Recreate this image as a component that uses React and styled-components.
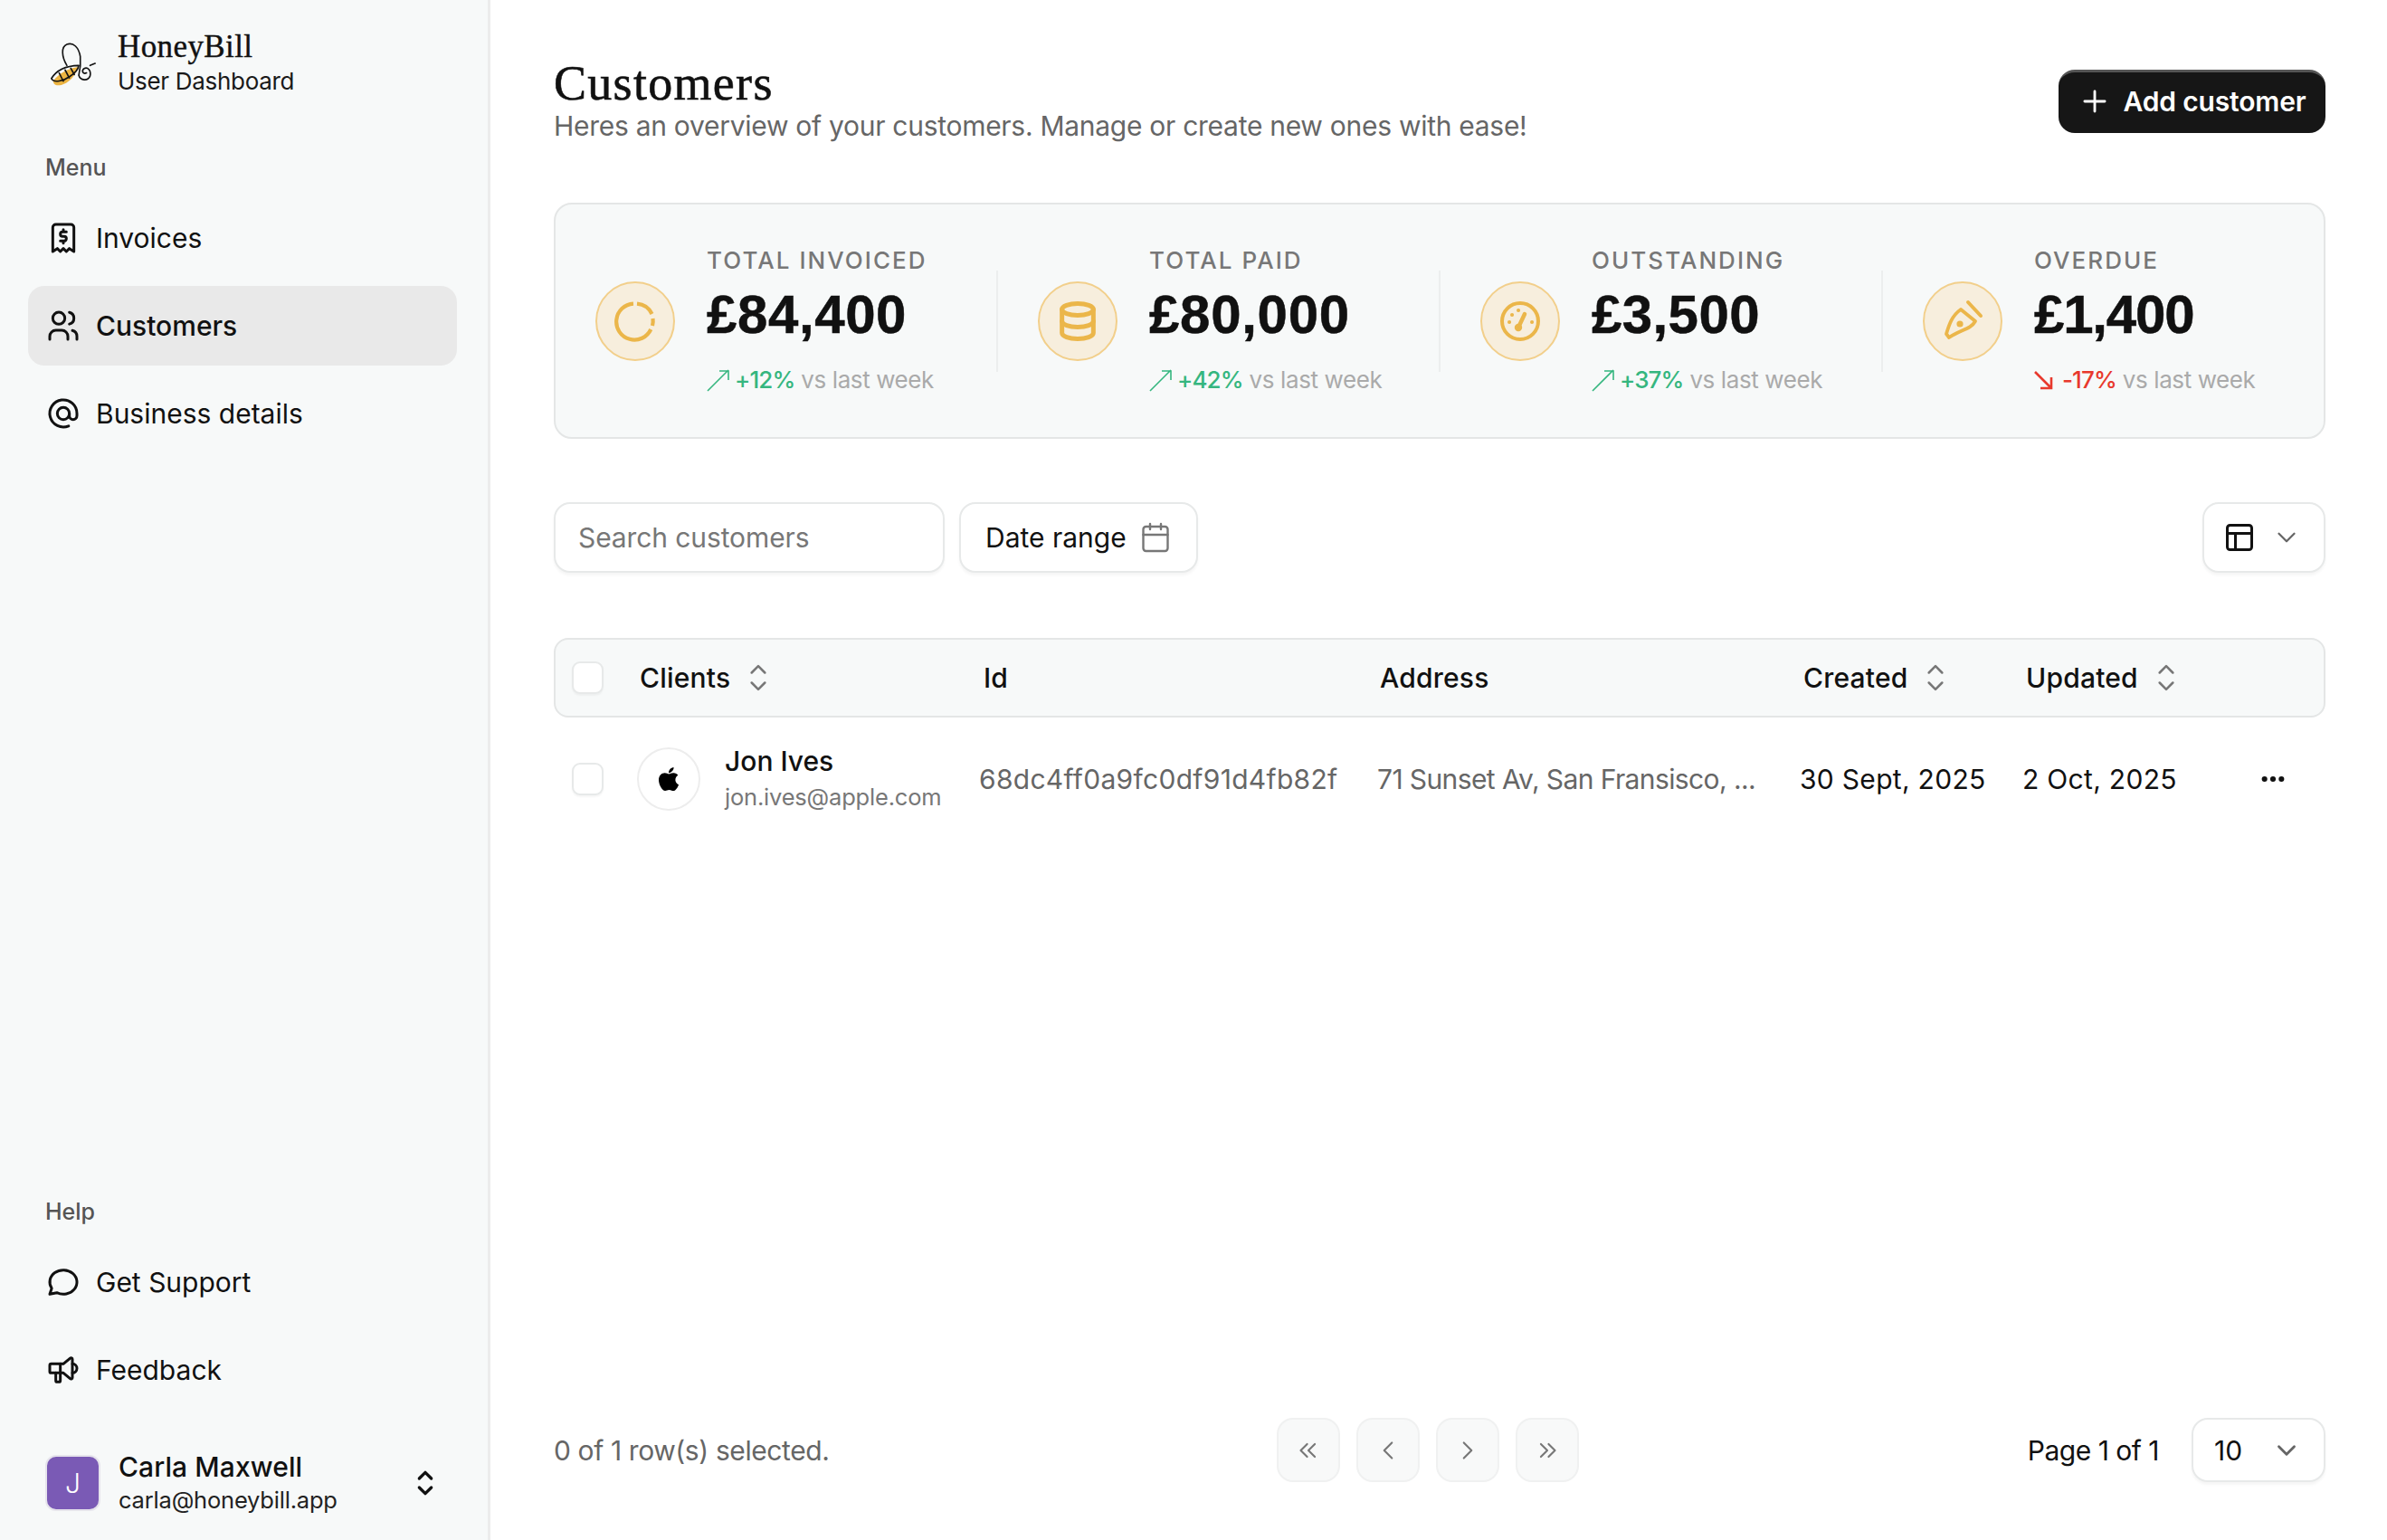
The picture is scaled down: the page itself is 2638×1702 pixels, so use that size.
import React from "react";
import styled, { createGlobalStyle } from "styled-components";
import { TbReceipt2, TbUsers, TbAt, TbMessageCircle, TbSpeakerphone, TbSelector, TbDatabase, TbPlus, TbChevronDown, TbChevronLeft, TbChevronRight, TbChevronsLeft, TbChevronsRight, TbDots } from "react-icons/tb";
import { FaApple } from "react-icons/fa";
import { PanelsTopLeft, Calendar } from "lucide-react";

const Global = createGlobalStyle`
  html, body { margin: 0; padding: 0; background: #fff; }
  body { font-family: Inter, "Liberation Sans", sans-serif; color: #111; -webkit-font-smoothing: antialiased; }
  * { box-sizing: border-box; }
`;

const Shell = styled.div`display: flex; width: 2638px; height: 1702px; overflow: hidden;`;
const Sidebar = styled.aside`
  width: 542px; flex: none; background: #f7f9f9; border-right: 3px solid #ececec;
  display: flex; flex-direction: column; padding: 0 34px 32px 31px;
`;
const Brand = styled.div`display: flex; align-items: flex-start; height: 149px; padding-top: 30px; gap: 23px; margin-left: 23px;`;
const BrandText = styled.div`display: flex; flex-direction: column;`;
const BrandName = styled.div`font: 500 35px/44px "Liberation Serif", serif; color: #111; letter-spacing: 0.4px; -webkit-text-stroke: 0.4px #111;`;
const BrandSub = styled.div`font-size: 26px; line-height: 32px; color: #1a1a1a; letter-spacing: -0.3px;`;
const SectionLabel = styled.div`font-size: 25px; line-height: 44px; font-weight: 500; color: #555; margin-left: 19px; height: 70px; padding-top: 14px;`;
const NavList = styled.nav`display: flex; flex-direction: column; gap: 9px;`;
const NavItem = styled.div`
  height: 88px; display: flex; align-items: center; gap: 16px; padding-left: 19px; border-radius: 18px;
  font-size: 30px; color: #111; letter-spacing: 0;
  background: ${(p) => (p.$active ? "#e9e9e9" : "transparent")};
  font-weight: ${(p) => (p.$active ? 500 : 400)};
  svg { flex: none; }
`;
const Spacer = styled.div`flex: 1;`;
const UserBlock = styled.div`display: flex; align-items: center; margin: 50px 0 0 19px; height: 62px;`;
const Avatar = styled.div`
  width: 61px; height: 62px; border-radius: 12px; background: #7a5ab5; border: 2px solid #e6e4ec;
  color: #fff; display: flex; align-items: center; justify-content: center; font-size: 30px; font-weight: 300; flex: none;
`;
const UserText = styled.div`display: flex; flex-direction: column; margin-left: 20px; flex: 1;`;
const UserName = styled.div`font-size: 30px; line-height: 38px; font-weight: 500; color: #111; letter-spacing: 0.1px;`;
const UserMail = styled.div`font-size: 25.5px; line-height: 36px; color: #222; letter-spacing: -0.2px;`;
const UserToggle = styled(TbSelector)`margin-right: 15px; flex: none;`;
const Main = styled.main`flex: 1; min-width: 0; display: flex; flex-direction: column; padding: 66px 68px 64px 70px;`;
const PageHead = styled.header`display: flex; justify-content: space-between; align-items: flex-start; height: 93px; margin-bottom: 65px;`;
const HeadText = styled.div`display: flex; flex-direction: column;`;
const Title = styled.h1`margin: 0; font: 400 54px/53px "Liberation Serif", serif; color: #111; letter-spacing: 1.3px; -webkit-text-stroke: 0.6px #111;`;
const Subtitle = styled.p`margin: 0; font-size: 30px; line-height: 40px; color: #666; letter-spacing: -0.28px;`;
const PrimaryButton = styled.button`
  width: 295px; height: 70px; margin-top: 11px; border: 0; border-top: 3px solid #555; border-radius: 18px; background: #161616; color: #fff;
  display: flex; align-items: center; justify-content: center; gap: 12px; padding: 0 0 4px; font: 600 30px Inter, sans-serif; letter-spacing: -0.15px;
`;
const StatsCard = styled.section`
  height: 261px; background: #f7f9f9; border: 2px solid #e4e6e6; border-radius: 20px; display: flex; align-items: center; margin-bottom: 70px;
`;
const Stat = styled.div`flex: 1; display: flex; align-items: center; gap: 35px; padding-left: 44px;`;
const StatDivider = styled.div`width: 2px; height: 112px; background: #eceeee; flex: none;`;
const IconCircle = styled.div`
  width: 88px; height: 88px; border-radius: 50%; background: #f7eedd; border: 2px solid #f2cf8b; color: #ebb64a;
  display: flex; align-items: center; justify-content: center; flex: none;
`;
const StatBody = styled.div`display: flex; flex-direction: column;`;
const StatLabel = styled.div`font-size: 26px; line-height: 34px; color: #777; letter-spacing: 2.05px; font-weight: 500;`;
const StatValue = styled.div`
  font: 700 60px/70px "Liberation Sans", sans-serif; color: #111; margin: 8px 0 19px; -webkit-text-stroke: 0.5px #111;
  letter-spacing: ${(p) => p.$tracking}px;
`;
const Trend = styled.div`display: flex; align-items: center; font-size: 26px; line-height: 36px; color: #aaa; gap: 7px; letter-spacing: -0.4px;`;
const Delta = styled.span`color: ${(p) => (p.$down ? "#e8392d" : "#35b67f")}; font-weight: 500; letter-spacing: -0.9px;`;
const Toolbar = styled.div`display: flex; gap: 16px; height: 78px; margin-bottom: 72px;`;
const Field = styled.div`
  height: 78px; background: #fff; border: 2px solid #e7e9e9; border-radius: 18px; box-shadow: 0 3px 3px rgba(0,0,0,.04);
  display: flex; align-items: center; font-size: 30px;
`;
const SearchField = styled(Field)`width: 432px; padding-left: 25px; color: #777; letter-spacing: -0.1px;`;
const DateField = styled(Field)`width: 264px; padding-left: 27px; gap: 14px; color: #111;`;
const ViewField = styled(Field)`width: 136px; margin-left: auto; padding-left: 21px; gap: 17px;`;
const TableHeader = styled.div`
  height: 88px; display: grid; grid-template-columns: 75px 380px 438px 468px 246px 1fr; align-items: center;
  background: #f7f9f9; border: 2px solid #e4e6e6; border-radius: 16px; padding-left: 18px;
  font-size: 30px; font-weight: 500; color: #111; letter-spacing: 0.2px;
`;
const TableRow = styled.div`
  height: 136px; display: grid; grid-template-columns: 72px 378px 440px 467px 246px 261px 1fr; align-items: center;
  padding-left: 20px; font-size: 30px; letter-spacing: 0.3px;
`;
const HeadCell = styled.div`display: flex; align-items: center; gap: 9px;`;
const Check = styled.div`width: 35px; height: 36px; background: #fff; border: 2px solid #e7e9e9; border-radius: 9px; box-shadow: 0 2px 2px rgba(0,0,0,.04);`;
const ClientCell = styled.div`display: flex; align-items: center; gap: 27px;`;
const LogoCircle = styled.div`width: 70px; height: 70px; border-radius: 50%; border: 2px solid #ededed; background: #fff; display: flex; align-items: center; justify-content: center; flex: none;`;
const ClientText = styled.div`display: flex; flex-direction: column;`;
const ClientName = styled.div`font-size: 30px; line-height: 40px; font-weight: 500; color: #111; letter-spacing: 0;`;
const ClientMail = styled.div`font-size: 25.5px; line-height: 40px; color: #777; letter-spacing: -0.2px; white-space: nowrap;`;
const Muted = styled.div`color: #666; white-space: nowrap;`;
const Address = styled(Muted)`letter-spacing: -0.6px;`;
const Dark = styled.div`color: #111; white-space: nowrap;`;
const Footer = styled.footer`margin-top: auto; display: flex; align-items: center; justify-content: space-between; height: 71px;`;
const FootNote = styled.div`font-size: 30px; color: #666; width: 799px; letter-spacing: -0.4px;`;
const Pager = styled.div`display: flex; gap: 18px;`;
const PageButton = styled.div`
  width: 70px; height: 71px; border-radius: 18px; background: #f8f9f9; border: 2px solid #f0f1f1; color: #777;
  display: flex; align-items: center; justify-content: center;
`;
const PageRight = styled.div`margin-left: auto; display: flex; align-items: center; gap: 36px; font-size: 30px; color: #111; letter-spacing: -0.5px;`;
const SizeSelect = styled.div`
  width: 148px; height: 71px; border-radius: 18px; background: #fff; border: 2px solid #e7e9e9; box-shadow: 0 3px 3px rgba(0,0,0,.04);
  display: flex; align-items: center; justify-content: space-between; padding: 0 24px 0 23px; letter-spacing: 0;
`;
const Sort = styled(TbSelector)`color: #777; flex: none;`;
const TableWrap = styled.div`display: flex; flex-direction: column;`;

const Bee = () => (
  <svg width="53" height="50" viewBox="70 75 160 152" fill="none" stroke="#141414" strokeWidth="5" strokeLinecap="round" strokeLinejoin="round" style={{ flex: "none", marginTop: 16 }}>
    <path d="M84 207 C105 180 135 165 168 160 C160 190 130 222 100 222 C90 222 84 215 84 207Z" fill="#ecb441" stroke="none" />
    <path d="M78 199 C95 170 130 156 170 155 C168 170 155 182 140 192 C120 207 85 215 78 199Z" />
    <path d="M104 180 L118 208 M124 170 L138 197 M143 164 L155 186" />
    <path d="M130 155 C112 125 110 92 130 84 C152 76 170 95 175 125 C177 150 172 180 170 188 C175 205 200 210 208 190 C212 172 200 158 187 166 C178 175 185 185 196 180" />
    <path d="M208 155 L225 148" />
  </svg>
);
const Ring = () => (
  <svg width="46" height="46" viewBox="0 0 46 46" fill="none" stroke="currentColor" strokeWidth="4.2">
    <path d="M25 3.6 A20 20 0 0 1 41.5 15" />
    <path d="M42.5 20 A20 20 0 0 1 42 28" />
    <path d="M40.3 32 A20 20 0 1 1 21 3.6" />
  </svg>
);
const Gauge = () => (
  <svg width="46" height="46" viewBox="0 0 46 46" fill="none" stroke="currentColor" strokeWidth="4" strokeLinecap="round">
    <circle cx="23" cy="23" r="20" />
    <path d="M21 30 L28 15" strokeWidth="4.5" />
    <circle cx="21" cy="30" r="2.2" fill="currentColor" />
    <path d="M11 24h.1M14 16h.1M21 11h.1M36 24h.1" strokeWidth="4" />
  </svg>
);
const Nib = () => (
  <svg width="48" height="48" viewBox="0 0 48 48" fill="none" stroke="currentColor" strokeWidth="3.8" strokeLinecap="round" strokeLinejoin="round">
    <path d="M22 11 L38 24 C33 33 22 33 9 42 L6 38 C9 28 12 18 22 11Z" />
    <circle cx="21" cy="27" r="3.6" fill="currentColor" stroke="none" />
    <path d="M30 3 L44 18" strokeWidth="4" />
  </svg>
);
const UpArrow = () => (
  <svg width="25" height="25" viewBox="0 0 25 25" fill="none" stroke="#35b67f" strokeWidth="1.6" style={{ flex: "none", marginRight: -1 }}>
    <path d="M1 24 L24 1 M14 2 H24 V12" />
  </svg>
);
const DownArrow = () => (
  <svg width="21" height="21" viewBox="0 0 21 21" fill="none" stroke="#e8392d" strokeWidth="2.6" style={{ flex: "none", marginRight: 3 }}>
    <path d="M1 1 L19 19 M19 7 V19 H7" />
  </svg>
);

const stats = [
  { label: "TOTAL INVOICED", value: "£84,400", tracking: 0.6, delta: "+12%", icon: <Ring /> },
  { label: "TOTAL PAID", value: "£80,000", tracking: 0.7, delta: "+42%", icon: <TbDatabase size={52} strokeWidth={2.3} /> },
  { label: "OUTSTANDING", value: "£3,500", tracking: 0.4, delta: "+37%", icon: <Gauge /> },
  { label: "OVERDUE", value: "£1,400", tracking: -1.2, delta: "-17%", down: true, icon: <Nib /> },
];

export default function App() {
  return (
    <Shell>
      <Global />
      <Sidebar>
        <Brand>
          <Bee />
          <BrandText>
            <BrandName>HoneyBill</BrandName>
            <BrandSub>User Dashboard</BrandSub>
          </BrandText>
        </Brand>
        <SectionLabel>Menu</SectionLabel>
        <NavList>
          <NavItem><TbReceipt2 size={40} strokeWidth={1.8} />Invoices</NavItem>
          <NavItem $active><TbUsers size={40} strokeWidth={1.8} />Customers</NavItem>
          <NavItem><TbAt size={40} strokeWidth={1.8} />Business details</NavItem>
        </NavList>
        <Spacer />
        <SectionLabel>Help</SectionLabel>
        <NavList>
          <NavItem><TbMessageCircle size={40} strokeWidth={1.8} />Get Support</NavItem>
          <NavItem><TbSpeakerphone size={40} strokeWidth={1.8} />Feedback</NavItem>
        </NavList>
        <UserBlock>
          <Avatar>J</Avatar>
          <UserText>
            <UserName>Carla Maxwell</UserName>
            <UserMail>carla@honeybill.app</UserMail>
          </UserText>
          <UserToggle size={40} strokeWidth={2} />
        </UserBlock>
      </Sidebar>
      <Main>
        <PageHead>
          <HeadText>
            <Title>Customers</Title>
            <Subtitle>Heres an overview of your customers. Manage or create new ones with ease!</Subtitle>
          </HeadText>
          <PrimaryButton><TbPlus size={38} strokeWidth={1.8} />Add customer</PrimaryButton>
        </PageHead>
        <StatsCard>
          {stats.map((s, i) => (
            <React.Fragment key={s.label}>
              {i > 0 && <StatDivider />}
              <Stat>
                <IconCircle>{s.icon}</IconCircle>
                <StatBody>
                  <StatLabel>{s.label}</StatLabel>
                  <StatValue $tracking={s.tracking}>{s.value}</StatValue>
                  <Trend>
                    {s.down ? <DownArrow /> : <UpArrow />}
                    <span><Delta $down={s.down}>{s.delta}</Delta> vs last week</span>
                  </Trend>
                </StatBody>
              </Stat>
            </React.Fragment>
          ))}
        </StatsCard>
        <Toolbar>
          <SearchField>Search customers</SearchField>
          <DateField>Date range<Calendar size={36} strokeWidth={1.6} color="#777" /></DateField>
          <ViewField><PanelsTopLeft size={36} strokeWidth={2} color="#111" /><TbChevronDown size={34} strokeWidth={1.6} color="#666" /></ViewField>
        </Toolbar>
        <TableWrap>
          <TableHeader>
            <Check />
            <HeadCell>Clients<Sort size={44} strokeWidth={1.4} /></HeadCell>
            <HeadCell>Id</HeadCell>
            <HeadCell>Address</HeadCell>
            <HeadCell>Created<Sort size={44} strokeWidth={1.4} /></HeadCell>
            <HeadCell>Updated<Sort size={44} strokeWidth={1.4} /></HeadCell>
          </TableHeader>
          <TableRow>
            <Check />
            <ClientCell>
              <LogoCircle><FaApple size={30} color="#000" /></LogoCircle>
              <ClientText>
                <ClientName>Jon Ives</ClientName>
                <ClientMail>jon.ives@apple.com</ClientMail>
              </ClientText>
            </ClientCell>
            <Muted>68dc4ff0a9fc0df91d4fb82f</Muted>
            <Address>71 Sunset Av, San Fransisco, ...</Address>
            <Dark>30 Sept, 2025</Dark>
            <Dark>2 Oct, 2025</Dark>
            <TbDots size={32} strokeWidth={2.6} color="#111" />
          </TableRow>
        </TableWrap>
        <Footer>
          <FootNote>0 of 1 row(s) selected.</FootNote>
          <Pager>
            <PageButton><TbChevronsLeft size={34} strokeWidth={1.5} /></PageButton>
            <PageButton><TbChevronLeft size={34} strokeWidth={1.5} /></PageButton>
            <PageButton><TbChevronRight size={34} strokeWidth={1.5} /></PageButton>
            <PageButton><TbChevronsRight size={34} strokeWidth={1.5} /></PageButton>
          </Pager>
          <PageRight>
            Page 1 of 1
            <SizeSelect>10<TbChevronDown size={34} strokeWidth={2} color="#666" /></SizeSelect>
          </PageRight>
        </Footer>
      </Main>
    </Shell>
  );
}
